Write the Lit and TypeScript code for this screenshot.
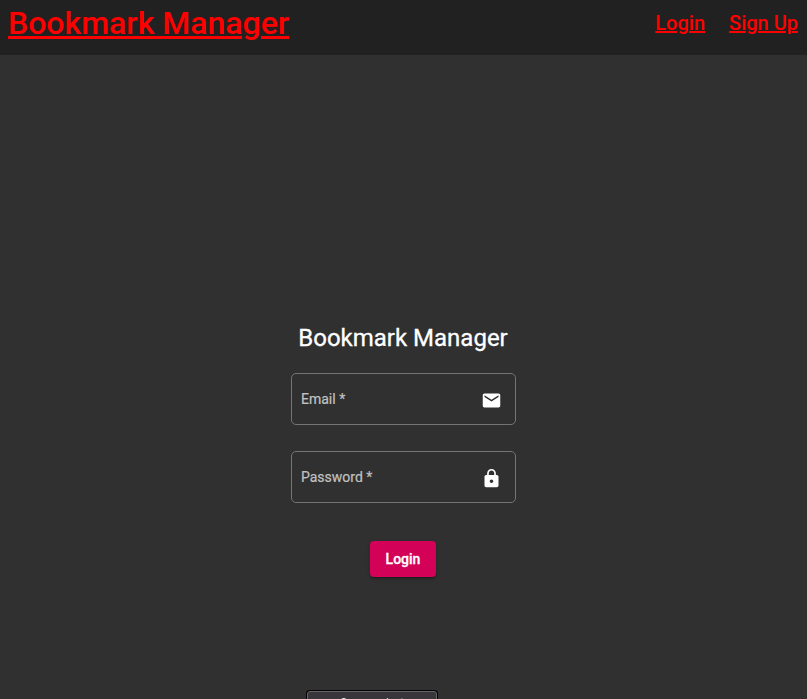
import { LitElement, html, css, svg } from "lit";
import { customElement } from "lit/decorators.js";

const mail = svg`<path d="M20 4H4c-1.1 0-1.99.9-1.99 2L2 18c0 1.1.9 2 2 2h16c1.1 0 2-.9 2-2V6c0-1.1-.9-2-2-2zm0 4l-8 5-8-5V6l8 5 8-5v2z"/>`;
const lock = svg`<path d="M18 8h-1V6c0-2.76-2.24-5-5-5S7 3.24 7 6v2H6c-1.1 0-2 .9-2 2v10c0 1.1.9 2 2 2h12c1.1 0 2-.9 2-2V10c0-1.1-.9-2-2-2zm-6 9c-1.1 0-2-.9-2-2s.9-2 2-2 2 .9 2 2-.9 2-2 2zm3.1-9H8.9V6c0-1.71 1.39-3.1 3.1-3.1 1.71 0 3.1 1.39 3.1 3.1v2z"/>`;

@customElement("app-root")
export class AppRoot extends LitElement {
  static styles = css`
    :host {
      display: flex;
      flex-direction: column;
      position: relative;
      height: 100vh;
      overflow: hidden;
      background: #303030;
      color: #fff;
      font-family: Roboto, sans-serif;
      -webkit-font-smoothing: antialiased;
    }
    header {
      display: flex;
      justify-content: space-between;
      flex: none;
      box-sizing: border-box;
      height: 55px;
      padding: 4px 9px 0 8px;
      background: #212121;
      font-weight: 500;
    }
    a {
      color: #f00;
      text-decoration: underline;
    }
    .brand {
      font-size: 32px;
      line-height: 38px;
    }
    nav {
      display: flex;
      gap: 24px;
      font-size: 20px;
      line-height: 38px;
    }
    main {
      display: flex;
      flex-direction: column;
      align-items: center;
      padding-top: 267px;
    }
    h1 {
      margin: 0 1px 19px 0;
      font-size: 24px;
      line-height: 32px;
      font-weight: 400;
      -webkit-text-stroke: 0.3px #fff;
    }
    .field {
      display: flex;
      align-items: center;
      justify-content: space-between;
      box-sizing: border-box;
      width: 225px;
      height: 52px;
      margin-bottom: 26px;
      padding: 0 13px 0 9px;
      border: 1px solid #747474;
      border-radius: 5px;
      font-size: 14px;
      color: #c1c1c1;
      -webkit-text-stroke: 0.2px #c1c1c1;
    }
    .field svg {
      width: 21px;
      height: 21px;
      margin-top: 2px;
      fill: #fff;
      -webkit-text-stroke: 0;
    }
    button {
      width: 66px;
      height: 36px;
      margin: 12px 1px 0 0;
      padding: 0;
      border: 0;
      border-radius: 4px;
      background: #d30157;
      color: #fff;
      font: 500 14px/36px Roboto, sans-serif;
      -webkit-text-stroke: 0.3px #fff;
      box-shadow: 0 3px 1px -2px rgba(0, 0, 0, 0.2), 0 2px 2px rgba(0, 0, 0, 0.14), 0 1px 5px rgba(0, 0, 0, 0.12);
    }
    .tip {
      position: absolute;
      left: 307px;
      top: 691px;
      box-sizing: border-box;
      width: 130px;
      height: 24px;
      border: 1px solid #69676a;
      border-radius: 3px;
      background: #38363a;
      box-shadow: 0 0 0 1px #000;
      color: #ddd;
      font: 12px/22px Inter, sans-serif;
      text-align: center;
    }
  `;

  private field(label: string, icon: unknown) {
    return html`<label class="field"><span>${label} *</span><svg viewBox="0 0 24 24">${icon}</svg></label>`;
  }

  render() {
    return html`
      <header>
        <a class="brand">Bookmark Manager</a>
        <nav><a>Login</a><a>Sign Up</a></nav>
      </header>
      <main>
        <h1>Bookmark Manager</h1>
        ${this.field("Email", mail)} ${this.field("Password", lock)}
        <button>Login</button>
      </main>
      <div class="tip">Screenshot</div>
    `;
  }
}
